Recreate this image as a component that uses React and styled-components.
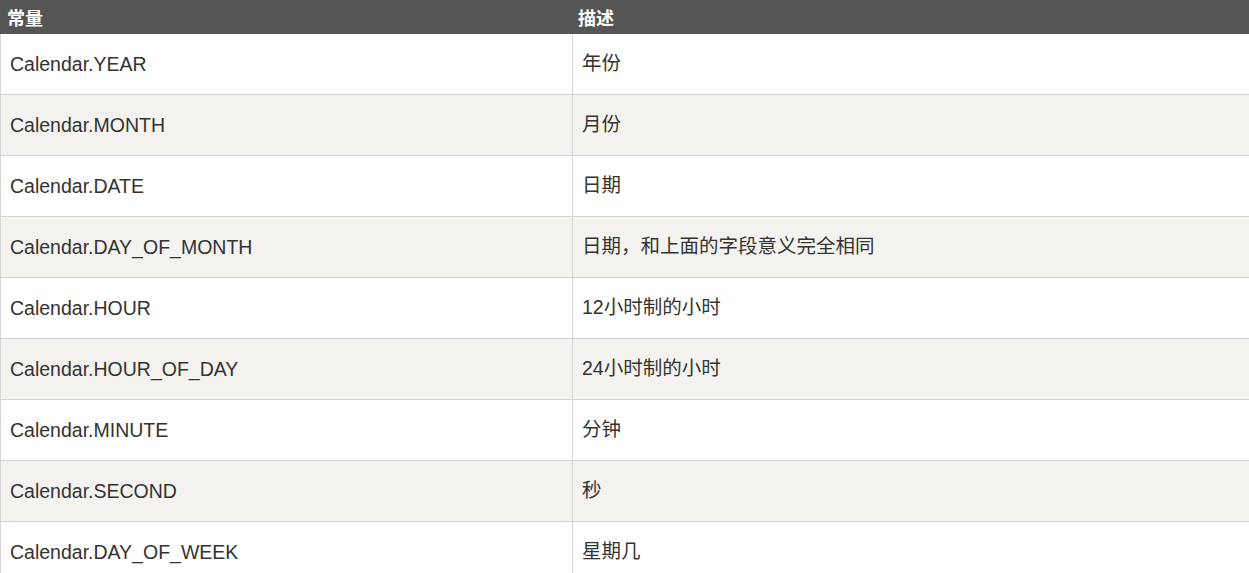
import React from "react";
import styled, { createGlobalStyle } from "styled-components";

const Global = createGlobalStyle`
  html, body { margin: 0; padding: 0; background: #fff; }
  body { font-family: "Liberation Sans", "Noto Sans CJK SC", sans-serif; }
`;

const Table = styled.table`
  width: 100%;
  border-collapse: collapse;
  table-layout: fixed;
  color: #333;
`;

const HeadCell = styled.th`
  background: #555;
  color: #fff;
  height: 34px;
  padding: 0 5px;
  text-align: left;
  font-size: 18px;
  font-weight: bold;
  font-family: "Noto Sans CJK SC", sans-serif;
  border-left: 1px solid #555;
  &:first-child { width: 560px; padding-left: 6px; }
`;

const Row = styled.tr`
  background: ${(p) => (p.$alt ? "#f4f3f0" : "#fff")};
`;

const Cell = styled.td`
  height: 60px;
  padding: 0 8px 0 9px;
  font-size: 19.5px;
  border: 1px solid #d4d4d4;
  border-top: none;
  border-right: none;
  &:last-child { height: 55px; padding-bottom: 5px; }
`;

const rows = [
  ["Calendar.YEAR", "年份"],
  ["Calendar.MONTH", "月份"],
  ["Calendar.DATE", "日期"],
  ["Calendar.DAY_OF_MONTH", "日期，和上面的字段意义完全相同"],
  ["Calendar.HOUR", "12小时制的小时"],
  ["Calendar.HOUR_OF_DAY", "24小时制的小时"],
  ["Calendar.MINUTE", "分钟"],
  ["Calendar.SECOND", "秒"],
  ["Calendar.DAY_OF_WEEK", "星期几"],
];

export default function App() {
  return (
    <>
      <Global />
      <Table>
        <thead>
          <tr>
            <HeadCell>常量</HeadCell>
            <HeadCell>描述</HeadCell>
          </tr>
        </thead>
        <tbody>
          {rows.map(([k, v], i) => (
            <Row key={k} $alt={i % 2 === 1}>
              <Cell>{k}</Cell>
              <Cell>{v}</Cell>
            </Row>
          ))}
        </tbody>
      </Table>
    </>
  );
}
